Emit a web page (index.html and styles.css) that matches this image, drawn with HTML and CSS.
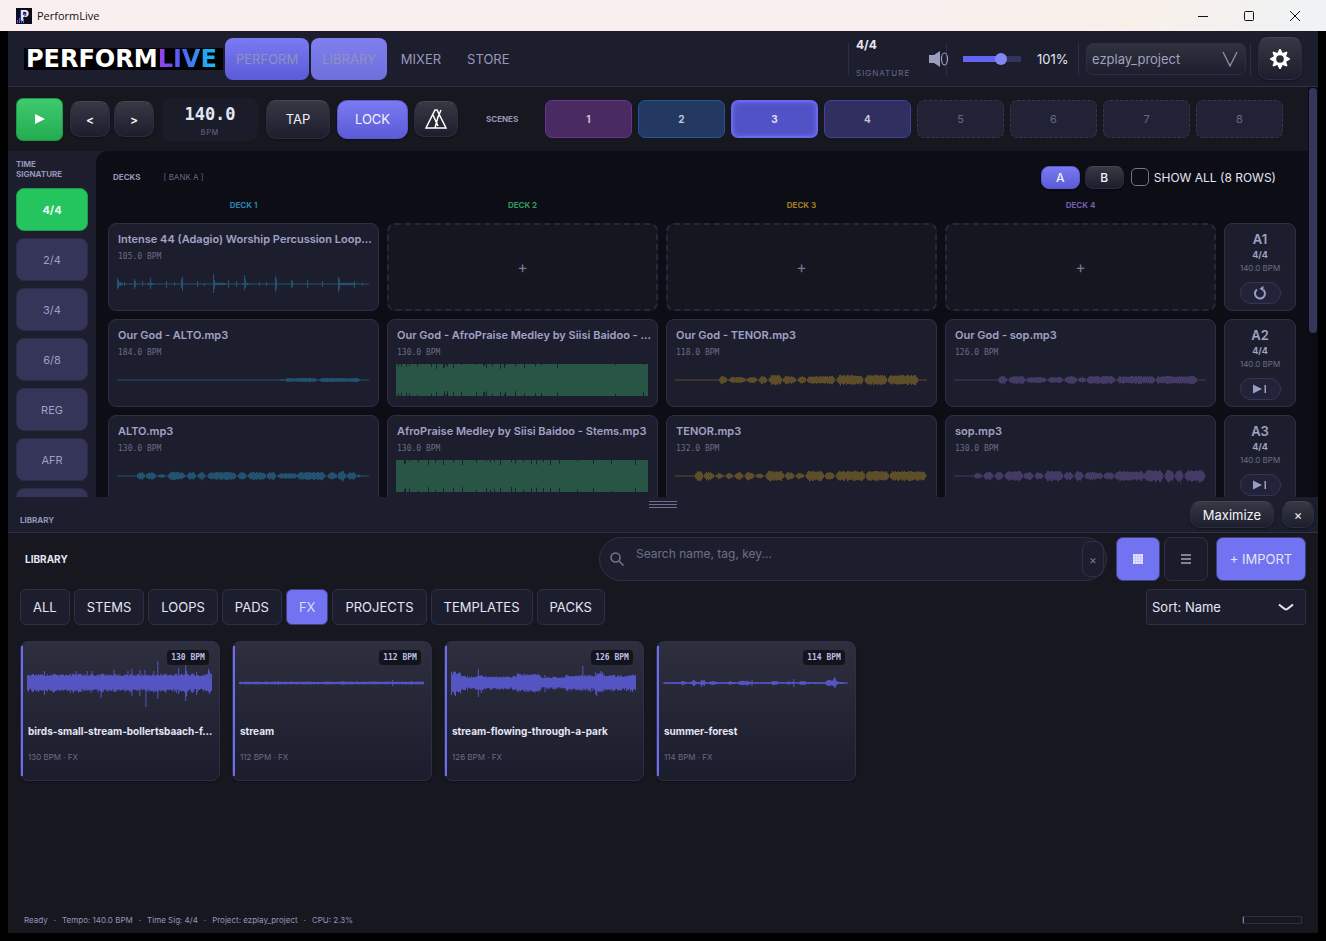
FILE: index.html
```html
<!DOCTYPE html>
<html lang="en">
<head>
    <meta charset="UTF-8">
    <title>PerformLive</title>
    <link rel="stylesheet" href="styles.css">
</head>
<body>
    <div class="titlebar">
        <svg class="app-icon" viewBox="0 0 16 16">
            <defs>
                <linearGradient id="barFill" x1="0" y1="0" x2="1" y2="0">
                    <stop offset="0" stop-color="#a13ce0"/>
                    <stop offset="1" stop-color="#2f8ff0"/>
                </linearGradient>
            </defs>
            <rect width="16" height="16" fill="#0b0b1c"/>
            <text x="4" y="13" class="app-letter">P</text>
            <path d="M1 15v-3h1v3zM3 15v-5h1v5zM5 15v-3h1v3zM7 15v-4h1v4z" fill="url(#barFill)"/>
            <path d="M8 5l3 2-3 2z" fill="#6a5cf0"/>
        </svg>
        <span class="app-name">PerformLive</span>
        <div class="window-buttons">
            <button aria-label="Minimize window"><svg viewBox="0 0 12 12"><path d="M1 6.5h10"/></svg></button>
            <button aria-label="Restore window"><svg viewBox="0 0 12 12"><rect x="1.5" y="1.5" width="9" height="9" rx="1"/></svg></button>
            <button aria-label="Close window"><svg viewBox="0 0 12 12"><path d="M1 1l10 10M11 1L1 11"/></svg></button>
        </div>
    </div>

    <div class="app">
        <header class="topbar">
            <div class="logo">PERFORM<span>LIVE</span></div>
            <nav class="nav">
                <button class="on">PERFORM</button>
                <button class="on light">LIBRARY</button>
                <button>MIXER</button>
                <button>STORE</button>
            </nav>
            <div class="divider"></div>
            <div class="signature"><b>4/4</b><small>SIGNATURE</small></div>
            <div class="divider"></div>
            <svg class="volume-icon" viewBox="0 0 20 18">
                <path d="M0 5h5l6-4v16l-6-4H0z" fill="#9a9dbd"/>
                <ellipse cx="15.5" cy="9" rx="3" ry="6" fill="none" stroke="#9a9dbd" stroke-width="1.2"/>
            </svg>
            <input class="volume" type="range" min="0" max="150" value="103" aria-label="Volume">
            <span class="percent">101%</span>
            <div class="divider"></div>
            <div class="project">
                <select aria-label="Project"><option>ezplay_project</option></select>
                <svg viewBox="0 0 16 16"><path d="M1 1l7 14 7-14"/></svg>
            </div>
            <div class="divider"></div>
            <button class="btn settings" aria-label="Settings">
                <svg viewBox="-12 -12 24 24"><path fill-rule="evenodd" d="M10-.6V.6L6.1 2.7 7.5 6.6 6.6 7.5 2.7 6.1 .6 10H-.6L-2.7 6.1-6.6 7.5-7.5 6.6-6.1 2.7-10 .6V-.6L-6.1-2.7-7.5-6.6-6.6-7.5-2.7-6.1-.6-10H.6L2.7-6.1 6.6-7.5 7.5-6.6 6.1-2.7zM3.8 0A3.8 3.8 0 1 0-3.8 0 3.8 3.8 0 1 0 3.8 0z" fill="#fff"/></svg>
            </button>
        </header>

        <section class="stage">
            <div class="stage-body">
                <div class="transport">
                    <button class="play" aria-label="Play"><svg viewBox="0 0 10 12"><path d="M0 1l10 5-10 5z" fill="#fff"/></svg></button>
                    <button class="btn step">&lt;</button>
                    <button class="btn step">&gt;</button>
                    <div class="bpm"><b>140.0</b><small>BPM</small></div>
                    <button class="btn tap">TAP</button>
                    <button class="btn lock">LOCK</button>
                    <button class="btn metronome" aria-label="Metronome">
                        <svg viewBox="0 0 24 22"><path d="M11 2h2l9 18H2zM11 20l3-11M9 7l5 11M17 2l-3 7"/></svg>
                    </button>
                    <span class="label scenes-label">SCENES</span>
                    <div class="scenes">
                        <button class="s1">1</button>
                        <button class="s2">2</button>
                        <button class="s3">3</button>
                        <button class="s4">4</button>
                        <button>5</button>
                        <button>6</button>
                        <button>7</button>
                        <button>8</button>
                    </div>
                </div>

                <div class="workspace">
                    <aside class="sidebar">
                        <span class="label">TIME<br>SIGNATURE</span>
                        <button class="on">4/4</button>
                        <button>2/4</button>
                        <button>3/4</button>
                        <button>6/8</button>
                        <button>REG</button>
                        <button>AFR</button>
                        <button aria-label="More"></button>
                    </aside>

                    <div class="decks">
                        <div class="decks-head">
                            <span class="label">DECKS</span>
                            <span class="bank-name">[ BANK A ]</span>
                            <button class="btn bank on">A</button>
                            <button class="btn bank">B</button>
                            <label class="show-all"><input type="checkbox"> SHOW ALL (8 ROWS)</label>
                        </div>
                        <div class="grid deck-names">
                            <span class="label c1">DECK 1</span>
                            <span class="label c2">DECK 2</span>
                            <span class="label c3">DECK 3</span>
                            <span class="label c4">DECK 4</span>
                        </div>
                        <div class="grid">
                            <div class="clip w1"><b>Intense 44 (Adagio) Worship Percussion Loop…</b><small>105.0 BPM</small><svg class="wave" data-wave="perc"></svg></div>
                            <button class="clip empty">+</button>
                            <button class="clip empty">+</button>
                            <button class="clip empty">+</button>
                            <div class="row-box"><b>A1</b><i>4/4</i><small>140.0 BPM</small>
                                <button aria-label="Loop row"><svg viewBox="0 0 14 14"><path d="M4 3.5A5 5 0 1 0 10.5 4" fill="none" stroke="#9a9dc4" stroke-width="2"/><path d="M6.5 2.5L10.5 0v5.5z" fill="#9a9dc4"/></svg></button>
                            </div>

                            <div class="clip w1"><b>Our God - ALTO.mp3</b><small>184.0 BPM</small><svg class="wave" data-wave="alto1"></svg></div>
                            <div class="clip w2"><b>Our God - AfroPraise Medley by Siisi Baidoo - …</b><small>130.0 BPM</small><svg class="wave" data-wave="full1"></svg></div>
                            <div class="clip w3"><b>Our God - TENOR.mp3</b><small>118.0 BPM</small><svg class="wave" data-wave="tenor1"></svg></div>
                            <div class="clip w4"><b>Our God - sop.mp3</b><small>126.0 BPM</small><svg class="wave" data-wave="sop1"></svg></div>
                            <div class="row-box"><b>A2</b><i>4/4</i><small>140.0 BPM</small>
                                <button aria-label="Play row once"><svg viewBox="0 0 14 14"><path d="M0 2.5l9 4.5-9 4.5zM11.5 3H13v8h-1.5z" fill="#9a9dc4"/></svg></button>
                            </div>

                            <div class="clip w1"><b>ALTO.mp3</b><small>130.0 BPM</small><svg class="wave" data-wave="alto2"></svg></div>
                            <div class="clip w2"><b>AfroPraise Medley by Siisi Baidoo - Stems.mp3</b><small>130.0 BPM</small><svg class="wave" data-wave="full2"></svg></div>
                            <div class="clip w3"><b>TENOR.mp3</b><small>132.0 BPM</small><svg class="wave" data-wave="tenor2"></svg></div>
                            <div class="clip w4"><b>sop.mp3</b><small>130.0 BPM</small><svg class="wave" data-wave="sop2"></svg></div>
                            <div class="row-box"><b>A3</b><i>4/4</i><small>140.0 BPM</small>
                                <button aria-label="Play row once"><svg viewBox="0 0 14 14"><path d="M0 2.5l9 4.5-9 4.5zM11.5 3H13v8h-1.5z" fill="#9a9dc4"/></svg></button>
                            </div>
                        </div>
                    </div>
                </div>
            </div>
            <div class="scroll-track"><div class="scroll-thumb"></div></div>
        </section>

        <section class="library">
            <div class="library-bar">
                <span class="label">LIBRARY</span>
                <div class="grip"></div>
                <div class="bar-buttons">
                    <button class="btn maximize">Maximize</button>
                    <button class="btn close">×</button>
                </div>
            </div>

            <div class="tools">
                <h2>LIBRARY</h2>
                <div class="search">
                    <svg viewBox="0 0 14 14"><circle cx="5.5" cy="5.5" r="4.5"/><path d="M9 9l4.5 4.5"/></svg>
                    <input type="text" placeholder="Search name, tag, key..." aria-label="Search library">
                    <button aria-label="Clear search">×</button>
                </div>
                <button class="tool on" aria-label="Grid view"><svg viewBox="0 0 10 10"><path d="M0 0h10v10H0z" fill="#e6e6ff"/><path d="M2.5 0v10M5 0v10M7.5 0v10M0 2.5h10M0 5h10M0 7.5h10" stroke="#b9baf8" stroke-width=".6"/></svg></button>
                <button class="tool" aria-label="List view"><svg viewBox="0 0 10 10"><path d="M0 1h10M0 5h10M0 9h10" stroke="#e6e6ff" stroke-width="1.2"/></svg></button>
                <button class="import">+ IMPORT</button>
            </div>

            <div class="filters">
                <button>ALL</button>
                <button>STEMS</button>
                <button>LOOPS</button>
                <button>PADS</button>
                <button class="on">FX</button>
                <button>PROJECTS</button>
                <button>TEMPLATES</button>
                <button>PACKS</button>
                <div class="sort">
                    <select aria-label="Sort"><option>Sort: Name</option></select>
                    <svg viewBox="0 0 16 8"><path d="M1 1.5q6 5 7 5t7-5"/></svg>
                </div>
            </div>

            <div class="cards">
                <article class="card"><span class="badge">130 BPM</span><svg class="wave" data-wave="birds"></svg><b>birds-small-stream-bollertsbaach-f…</b><small>130 BPM · FX</small></article>
                <article class="card"><span class="badge">112 BPM</span><svg class="wave" data-wave="stream"></svg><b>stream</b><small>112 BPM · FX</small></article>
                <article class="card"><span class="badge">126 BPM</span><svg class="wave" data-wave="park"></svg><b>stream-flowing-through-a-park</b><small>126 BPM · FX</small></article>
                <article class="card"><span class="badge">114 BPM</span><svg class="wave" data-wave="forest"></svg><b>summer-forest</b><small>114 BPM · FX</small></article>
            </div>

            <footer class="status">
                <ul>
                    <li>Ready</li>
                    <li>Tempo: 140.0 BPM</li>
                    <li>Time Sig: 4/4</li>
                    <li>Project: ezplay_project</li>
                    <li>CPU: 2.3%</li>
                </ul>
                <div class="cpu"><div></div></div>
            </footer>
        </section>
    </div>
    <script src="waves.js"></script>
</body>
</html>
```

FILE: styles.css
```css
* {
    box-sizing: border-box;
}
body {
    margin: 0;
    height: 100vh;
    display: flex;
    flex-direction: column;
    background: #000;
    color: #e4e5f5;
    font-family: Inter, sans-serif;
    font-size: 13px;
    overflow: hidden;
}
button, select, input {
    font: inherit;
    color: inherit;
    margin: 0;
    padding: 0;
}
button {
    display: flex;
    align-items: center;
    justify-content: center;
    background: none;
    border: none;
    cursor: pointer;
    flex-shrink: 0;
}
.label {
    font-size: 8px;
    line-height: 10px;
    font-weight: 700;
    color: #9496b8;
}

/* window frame */
.titlebar {
    height: 31px;
    flex-shrink: 0;
    display: flex;
    align-items: center;
    gap: 5px;
    padding: 0 8px 0 16px;
    background: linear-gradient(90deg, #f9efee 70%, #f9f0ea 86%, #f0f2f3 98%);
    color: #111;
}
.app-icon {
    width: 16px;
    height: 16px;
}
.app-letter {
    font: 700 14px Inter, sans-serif;
    fill: #eef;
}
.app-name {
    font: 11px "Open Sans", sans-serif;
}
.window-buttons {
    display: flex;
    margin-left: auto;
}
.window-buttons button {
    width: 46px;
    height: 31px;
}
.window-buttons svg {
    width: 12px;
    height: 12px;
    fill: none;
    stroke: #111;
}
.app {
    flex: 1;
    min-height: 0;
    margin: 0 8px 8px;
    display: flex;
    flex-direction: column;
    background: #171720;
}

/* top bar */
.topbar {
    height: 56px;
    flex-shrink: 0;
    display: flex;
    align-items: center;
    padding: 0 16px;
    background: #1d1e2d;
    border-bottom: 1px solid #2f3048;
}
.logo {
    background: #020204;
    color: #fff;
    width: 199px;
    font: 700 24px/22px "DejaVu Sans", sans-serif;
    padding-left: 2px;
}
.logo span {
    background: linear-gradient(90deg, #a03ce8, #4c62f5 40%, #10c4f5);
    -webkit-background-clip: text;
    background-clip: text;
    color: transparent;
}
.nav {
    display: flex;
    gap: 2px;
    margin: 0 auto 0 2px;
}
.nav button {
    height: 42px;
    padding: 0 12px;
    border-radius: 8px;
    color: #9799ba;
}
.nav .on {
    padding: 0 11px;
    background: linear-gradient(#7a7af2, #5c5bd8);
    color: #9092be;
}
.nav .light {
    background: linear-gradient(#7f7fee, #6f6fdc);
}
.divider {
    width: 1px;
    height: 32px;
    background: #2d2e47;
}
.signature {
    width: 97px;
    height: 44px;
    padding-left: 7px;
    display: flex;
    flex-direction: column;
    justify-content: space-between;
}
.signature b {
    font-size: 12px;
    line-height: 16px;
}
.signature small {
    font-size: 8px;
    line-height: 16px;
    letter-spacing: 1px;
    color: #66678a;
}
.volume-icon {
    width: 20px;
    height: 18px;
    margin-left: -18px;
}
.volume {
    appearance: none;
    width: 58px;
    height: 12px;
    margin: 0 16px 0 14px;
    background: linear-gradient(90deg, #6466f1 66%, #34345a 66%) center / 100% 6px no-repeat;
    border-radius: 3px;
}
.volume::-webkit-slider-thumb {
    appearance: none;
    width: 12px;
    height: 12px;
    border-radius: 50%;
    background: #8586f5;
}
.percent {
    width: 41px;
}
.project {
    display: grid;
    align-items: center;
    margin: 0 4px 0 7px;
}
.project select, .project svg, .sort select, .sort svg {
    grid-area: 1 / 1;
}
.project select {
    appearance: none;
    width: 160px;
    height: 32px;
    padding-left: 5px;
    background: linear-gradient(#31323f, #1d1e2d);
    border: 1px solid #2d2e47;
    border-radius: 7px;
    color: #9fa1bd;
}
.project svg {
    width: 16px;
    height: 16px;
    justify-self: end;
    margin-right: 8px;
    pointer-events: none;
    fill: none;
    stroke: #8e90ae;
    stroke-width: 1.3;
}
.btn {
    background: linear-gradient(#373844, #1d1e2c);
    border: 1px solid #2b2c42;
    border-top-color: #454652;
    border-radius: 10px;
    box-shadow: 0 1px 2px rgba(0, 0, 0, .4);
    color: #f2f2fa;
}
.settings {
    width: 44px;
    height: 43px;
    margin-left: 7px;
}
.settings svg {
    width: 24px;
    height: 24px;
}

/* transport row */
.stage {
    flex: 410 1 0;
    min-height: 0;
    display: flex;
}
.stage-body {
    flex: 1;
    min-width: 0;
    display: flex;
    flex-direction: column;
}
.transport {
    height: 64px;
    flex-shrink: 0;
    display: flex;
    align-items: center;
    padding: 0 25px 0 8px;
}
.play {
    width: 47px;
    height: 43px;
    margin-right: 7px;
    border-radius: 7px;
    background: linear-gradient(#3fca70, #22ad51);
    border: 1px solid #1d9a49;
}
.play svg {
    width: 10px;
    height: 12px;
}
.step {
    width: 40px;
    height: 36px;
    margin-right: 4px;
    font-size: 12px;
    font-weight: 600;
}
.bpm {
    width: 96px;
    height: 43px;
    margin: 0 8px 0 4px;
    padding-top: 6px;
    display: flex;
    flex-direction: column;
    align-items: center;
    background: #1b1c29;
    border-radius: 8px;
}
.bpm b {
    font: 700 17px/20px "DejaVu Sans Mono", monospace;
}
.bpm small {
    font-size: 7px;
    line-height: 18px;
    letter-spacing: 1px;
    color: #6b6c8a;
}
.tap {
    width: 64px;
    height: 39px;
    margin-right: 7px;
}
.lock {
    width: 71px;
    height: 39px;
    margin-right: 6px;
}
.lock, .bank.on {
    background: linear-gradient(#7a7af2, #5c5bd8);
    border-color: #5a5acb;
}
.metronome {
    width: 44px;
    height: 36px;
}
.metronome svg {
    width: 24px;
    height: 22px;
    fill: none;
    stroke: #fff;
    stroke-width: 1.5;
}
.scenes-label {
    margin: 0 27px 0 28px;
    width: 32px;
}
.scenes {
    flex: 1;
    display: grid;
    grid-template-columns: repeat(8, 1fr);
    gap: 6px;
}
.scenes button {
    height: 38px;
    border: 1px dashed #34354f;
    border-radius: 7px;
    background: #212235;
    color: #66688a;
    font-size: 11px;
}
.scenes .s1, .scenes .s2, .scenes .s3, .scenes .s4 {
    border-style: solid;
    color: #c5c5d8;
    font-size: 10px;
    font-weight: 700;
}
.scenes .s1 {
    background: #4a2b61;
    border-color: #693394;
}
.scenes .s2 {
    background: #233961;
    border-color: #25529b;
}
.scenes .s3 {
    background: #5152c6;
    border: 2px solid #6768ed;
    box-shadow: inset 0 0 5px #6c6df0;
    color: #e0e0f5;
}
.scenes .s4 {
    background: #302f60;
    border-color: #4041a0;
}
.scroll-track {
    width: 10px;
    padding: 1px;
    background: #0c0c14;
}
.scroll-thumb {
    height: 60%;
    border-radius: 4px;
    background: #36365c;
}

/* decks */
.workspace {
    flex: 1;
    min-height: 0;
    display: flex;
    background: #1d1e2d;
    overflow: hidden;
}
.sidebar {
    width: 88px;
    flex-shrink: 0;
    padding: 8px;
    display: flex;
    flex-direction: column;
    gap: 7px;
}
.sidebar .label {
    margin-bottom: 2px;
}
.sidebar button {
    height: 43px;
    border: 1px solid #2c2c48;
    border-radius: 8px;
    background: #353559;
    color: #9d9fc6;
    font-size: 11px;
}
.sidebar .on {
    background: #24c45e;
    border-color: #209c4f;
    color: #effff4;
    font-weight: 700;
}
.decks {
    flex: 1;
    min-width: 0;
    padding: 12px;
    background: #0c0d15;
    border-top-left-radius: 12px;
}
.decks-head {
    height: 28px;
    display: flex;
    align-items: center;
    padding: 0 16px 0 5px;
}
.bank-name {
    margin: 0 auto 0 23px;
    font-size: 8px;
    color: #66688a;
}
.bank {
    width: 39px;
    height: 23px;
    margin-right: 5px;
    border-radius: 8px;
    font-size: 12px;
    font-weight: 500;
}
.show-all {
    display: flex;
    align-items: center;
    gap: 5px;
    margin: 0 4px 0 2px;
    font-size: 12px;
}
.show-all input {
    appearance: none;
    width: 18px;
    height: 18px;
    border: 1px solid #757583;
    border-radius: 5px;
}
.grid {
    display: grid;
    grid-template-columns: repeat(4, minmax(0, 1fr)) 72px;
    grid-auto-rows: 88px;
    gap: 8px;
}
.deck-names {
    grid-auto-rows: 32px;
    text-align: center;
    padding-top: 9px;
    height: 32px;
}
.c1 { color: #2b84ad; }
.c2 { color: #2f9a5d; }
.c3 { color: #a67f22; }
.c4 { color: #755bb0; }
.w1 { --wave: #225270; }
.w2 { --wave: #295546; }
.w3 { --wave: #5e4d29; }
.w4 { --wave: #433b66; }
.clip {
    display: flex;
    flex-direction: column;
    padding: 8px 9px 0 8px;
    background: #1d1e2d;
    border: 1px solid #2e2f47;
    border-radius: 8px;
    min-width: 0;
}
.clip b {
    padding-left: 1px;
    font-size: 11px;
    line-height: 14px;
    font-weight: 600;
    color: #a0a2c6;
    white-space: nowrap;
}
.clip small {
    padding-left: 1px;
    font: 8px/12px "DejaVu Sans Mono", monospace;
    margin: 5px 0 4px;
    color: #6a6b88;
}
.clip .wave {
    height: 34px;
    flex-shrink: 0;
    fill: var(--wave);
}
.wave {
    display: block;
    width: 100%;
}
.empty {
    align-items: center;
    padding: 0;
    background: #141620;
    border: 2px dashed #26273b;
    color: #777894;
    font-size: 16px;
}
.row-box {
    display: flex;
    flex-direction: column;
    align-items: center;
    padding-top: 7px;
    background: #1d1e2d;
    border: 1px solid #2e2f47;
    border-radius: 8px;
    color: #a0a2c6;
}
.row-box b {
    font-size: 13px;
    line-height: 16px;
    font-weight: 600;
}
.row-box i {
    font-size: 9px;
    line-height: 16px;
    font-style: normal;
    font-weight: 700;
}
.row-box small {
    font-size: 8px;
    line-height: 10px;
    color: #6a6b88;
}
.row-box button {
    width: 41px;
    height: 22px;
    margin-top: 9px;
    border: 1px solid #34355a;
    border-radius: 11px;
    background: #222339;
}
.row-box svg {
    width: 14px;
    height: 14px;
}

/* library */
.library {
    flex: 436 1 0;
    min-height: 0;
    display: flex;
    flex-direction: column;
}
.library-bar {
    height: 36px;
    flex-shrink: 0;
    display: grid;
    grid-template-columns: 1fr 28px 1fr;
    align-items: center;
    padding: 0 4px;
    background: #1d1e2d;
    border-bottom: 1px solid #2f3048;
}
.library-bar .label {
    padding: 10px 0 0 8px;
}
.grip {
    height: 7px;
    align-self: start;
    margin-top: 4px;
    background: repeating-linear-gradient(#6f7090 0 1px, transparent 1px 3px);
}
.bar-buttons {
    display: flex;
    justify-content: flex-end;
    gap: 8px;
}
.maximize {
    width: 84px;
    height: 27px;
}
.close {
    width: 32px;
    height: 27px;
}
.tools {
    display: flex;
    align-items: center;
    padding: 4px 12px 0 17px;
}
.tools h2 {
    margin: 0 auto 0 0;
    font-size: 10px;
    font-weight: 700;
}
.search {
    flex: 0 1 508px;
    height: 44px;
    margin-right: 9px;
    padding: 0 2px 0 10px;
    display: flex;
    align-items: center;
    gap: 12px;
    background: #1d1e2d;
    border: 1px solid #2e2f47;
    border-radius: 22px;
}
.search svg {
    width: 14px;
    height: 14px;
    fill: none;
    stroke: #73748f;
    stroke-width: 1.5;
}
.search input {
    flex: 1;
    min-width: 0;
    height: 42px;
    padding-bottom: 12px;
    background: none;
    border: none;
    font-size: 12px;
}
.search input::placeholder {
    color: #6d6e8b;
}
.search button {
    width: 22px;
    height: 36px;
    border: 1px solid #2e2f47;
    border-radius: 8px;
    color: #73748f;
    font-size: 12px;
}
.tool {
    width: 44px;
    height: 44px;
    margin-right: 4px;
    border: 1px solid #2e2f47;
    border-radius: 7px;
    background: #1b1c29;
}
.tool svg {
    width: 10px;
    height: 10px;
}
.tool.on, .import {
    background: #7173f1;
    border: 1px solid #3f4080;
    border-radius: 7px;
}
.import {
    width: 90px;
    height: 44px;
    margin-left: 4px;
}
.filters {
    display: flex;
    gap: 4px;
    padding: 8px 12px 0;
}
.filters button {
    height: 36px;
    padding: 0 12px;
    border: 1px solid #2e2f47;
    border-radius: 6px;
    background: #1d1e2d;
}
.filters .on {
    background: #7173f1;
    border-color: #3f4080;
    color: #dcdcff;
}
.sort {
    display: grid;
    align-items: center;
    margin-left: auto;
}
.sort select {
    appearance: none;
    width: 160px;
    height: 36px;
    padding-left: 5px;
    background: #1d1e2d;
    border: 1px solid #2e2f47;
    border-radius: 3px;
}
.sort svg {
    width: 16px;
    height: 8px;
    justify-self: end;
    margin-right: 12px;
    pointer-events: none;
    fill: none;
    stroke: #e4e5f5;
    stroke-width: 2;
}
.cards {
    flex: 1;
    display: flex;
    align-items: flex-start;
    flex-wrap: wrap;
    gap: 12px;
    padding: 16px 12px 0;
}
.card {
    position: relative;
    width: 200px;
    height: 140px;
    padding: 9px 7px 0 6px;
    background: linear-gradient(#2d2e3e, #1b1c2c);
    border: 1px solid #2e2f47;
    border-radius: 8px;
    display: flex;
    flex-direction: column;
    box-shadow: 0 1px 2px rgba(0, 0, 0, .3);
}
.card::before {
    content: "";
    position: absolute;
    left: 0;
    top: 4px;
    bottom: 4px;
    width: 2px;
    background: #6b6df0;
}
.card .wave {
    height: 64px;
    fill: #5455c2;
}
.card b {
    padding-left: 1px;
    font-size: 10px;
    line-height: 14px;
    font-weight: 700;
    margin-top: 9px;
    white-space: nowrap;
}
.card small {
    padding-left: 1px;
    font-size: 8px;
    line-height: 12px;
    margin-top: 13px;
    color: #6a6b88;
}
.badge {
    position: absolute;
    right: 10px;
    top: 8px;
    width: 42px;
    border-radius: 4px;
    background: #12131b;
    color: #bcbfe8;
    font: 700 8px/15px "DejaVu Sans Mono", monospace;
    text-align: center;
}
.status {
    height: 27px;
    flex-shrink: 0;
    display: flex;
    align-items: center;
    justify-content: space-between;
    padding: 0 16px;
    font-size: 8px;
    color: #9496b8;
}
.status ul {
    display: flex;
    margin: 0;
    padding: 0;
    list-style: none;
}
.status li + li::before {
    content: "·";
    margin: 0 6px;
}
.cpu {
    width: 60px;
    height: 8px;
    border: 1px solid #2e2f47;
}
.cpu div {
    width: 1px;
    height: 6px;
    background: #7b7cb0;
}
```

FILE: waves.js
```js
// spans: [from, to, amplitude], spikes: [x, up, down]
const waves = {
    perc: { w: 252, h: 34, spans: [[0, 6, 2], [30, 37, 1.5], [96, 109, 1.5], [125, 132, 1.5], [221, 240, 1.3]],
        spikes: [[0, 6, 5], [1, 4, 4], [7, 2, 2], [17, 5, 5], [18, 3, 3], [25, 3, 2], [33, 6, 5], [49, 3, 4], [57, 2, 2], [64, 5, 4], [65, 7, 7], [80, 3, 3], [87, 1, 2], [96, 10, 9], [97, 4, 5], [111, 4, 4], [119, 3, 3], [127, 9, 6], [128, 5, 4], [142, 2, 2], [149, 2, 2], [158, 8, 8], [159, 5, 5], [174, 4, 4], [175, 3, 3], [190, 4, 4], [205, 3, 3], [221, 7, 8], [222, 5, 5], [237, 3, 4], [245, 1, 2]] },
    alto1: { w: 252, h: 34, spans: [[162, 168, 1], [168, 200, 2], [202, 243, 2]] },
    alto2: { w: 252, h: 34, spans: [[20, 28, 4], [29, 39, 4], [41, 48, 2], [51, 68, 4], [70, 79, 4], [81, 88, 4], [91, 119, 4], [121, 129, 4], [131, 149, 4], [150, 159, 4], [161, 180, 3], [180, 208, 4], [211, 220, 4], [221, 229, 5], [230, 239, 4], [240, 244, 2]] },
    full1: { w: 252, h: 34, spans: [[0, 252, 16]], notches: [2, 5, 10, 13, 21, 35, 40, 47, 48, 50, 51, 57, 65, 80, 87, 88, 90, 96, 104, 108, 109, 119, 128, 139, 145, 161, 219, 247] },
    full2: { w: 252, h: 34, spans: [[0, 252, 16]], notches: [8, 9, 13, 22, 32, 39, 47, 57, 66, 80, 90, 94, 98, 104, 115, 119, 127, 135, 140, 147, 154, 163, 181, 197, 215, 239] },
    tenor1: { w: 252, h: 34, spans: [[44, 52, 4], [54, 71, 3], [72, 82, 3], [84, 92, 4], [94, 107, 5], [108, 121, 4], [123, 131, 4], [132, 160, 4], [162, 188, 5], [190, 212, 5], [213, 243, 5]] },
    tenor2: { w: 252, h: 34, spans: [[20, 28, 5], [29, 39, 4], [41, 48, 3], [51, 58, 3], [60, 68, 4], [70, 79, 4], [81, 88, 3], [91, 109, 5], [110, 119, 4], [121, 129, 3], [131, 149, 5], [150, 159, 4], [161, 190, 5], [191, 214, 5], [215, 251, 5]] },
    sop1: { w: 252, h: 34, spans: [[44, 53, 4], [55, 71, 4], [72, 92, 3], [94, 109, 3], [111, 123, 4], [124, 132, 3], [133, 161, 4], [163, 201, 4], [202, 243, 4]] },
    sop2: { w: 252, h: 34, spans: [[20, 28, 3], [30, 39, 4], [41, 49, 4], [51, 69, 5], [70, 79, 4], [81, 89, 4], [91, 109, 5], [110, 119, 4], [121, 129, 5], [131, 149, 4], [150, 160, 4], [161, 190, 5], [190, 209, 6], [211, 220, 6], [221, 229, 6], [231, 251, 6]] },
    birds: { w: 186, h: 64, base: 7, spans: [[0, 186, 9]],
        spikes: [[17, 12, 12], [49, 12, 8], [60, 12, 8], [65, 12, 7], [74, 9, 15], [87, 13, 9], [101, 12, 8], [105, 14, 13], [113, 13, 13], [118, 13, 7], [119, 8, 24], [127, 12, 10], [131, 22, 16], [152, 15, 11], [159, 18, 18], [160, 12, 13], [170, 11, 12], [182, 14, 9], [183, 12, 11]] },
    stream: { w: 186, h: 64, base: 1, spans: [[0, 186, 1.4]], spikes: [[39, 2, 2], [104, 2, 2], [154, 3, 3], [173, 2, 2]] },
    park: { w: 186, h: 64, base: 5, spans: [[0, 10, 11], [10, 66, 7], [66, 90, 9], [90, 115, 6], [115, 145, 8], [145, 152, 11], [152, 186, 8]],
        spikes: [[3, 12, 12], [4, 11, 13], [27, 14, 14], [30, 8, 10], [94, 8, 9], [132, 17, 8], [146, 8, 13], [150, 12, 9], [152, 11, 9]] },
    forest: { w: 186, h: 64, spans: [[0, 186, 1], [17, 24, 2], [28, 34, 3], [37, 43, 3], [46, 54, 2], [65, 70, 2], [75, 88, 2.4], [108, 117, 2], [124, 129, 2], [136, 145, 2], [163, 176, 3]],
        spikes: [[38, 3, 4], [41, 3, 3], [67, 2, 2], [89, 3, 3], [131, 4, 4], [171, 4, 3], [172, 6, 5], [173, 4, 4]] }
};

// small repeatable generator so the shapes stay the same on each load
function makeRandom(seed) {
    return () => {
        seed = (seed * 1103515245 + 12345) % 2147483648;
        return seed / 2147483648;
    };
}

function drawWave(svg, wave, seed) {
    const random = makeRandom(seed);
    const up = new Array(wave.w).fill(0.5);
    const down = new Array(wave.w).fill(0.5);

    wave.spans.forEach(([from, to, amp]) => {
        for (let x = from; x < to; x++) {
            const edge = Math.min(1, (Math.min(x - from, to - 1 - x) + 2) / 4);
            const rough = amp > 12 ? 1 : 0.75 + random() * 0.3;
            const level = amp > 12 ? amp : Math.max(wave.base || 0.5, amp * rough * (wave.base ? 1 : edge));
            up[x] = level;
            down[x] = amp > 12 ? level : Math.max(0.5, level * (0.8 + random() * 0.3));
        }
    });
    (wave.notches || []).forEach(x => {
        up[x] -= 1 + random() * 4;
        down[x] -= 1 + random() * 4;
    });
    (wave.spikes || []).forEach(([x, a, b]) => {
        up[x] = a;
        down[x] = b;
    });

    const mid = wave.h / 2;
    let d = '';
    for (let x = 0; x < wave.w; x++) {
        d += `M${x} ${mid - up[x]}h1.05V${mid + down[x]}h-1.05z`;
    }
    svg.setAttribute('viewBox', `0 0 ${wave.w} ${wave.h}`);
    svg.setAttribute('preserveAspectRatio', 'none');
    svg.innerHTML = `<path d="${d}"/>`;
}

document.querySelectorAll('.wave').forEach((svg, i) => {
    drawWave(svg, waves[svg.dataset.wave], i * 97 + 11);
});
```
